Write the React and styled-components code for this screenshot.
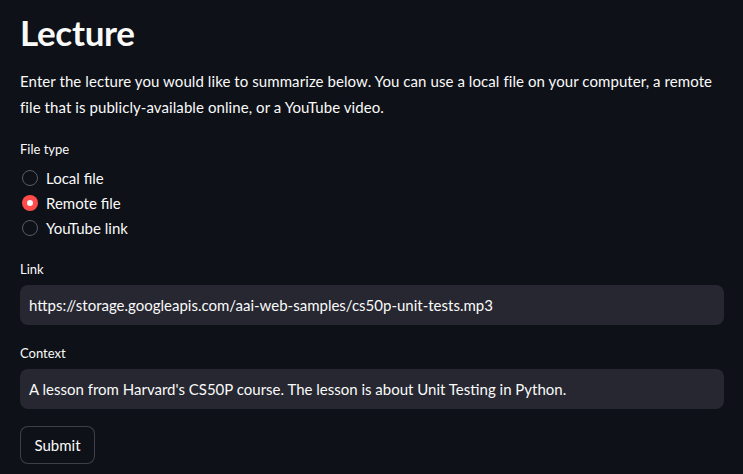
import styled, { createGlobalStyle } from "styled-components";

const GlobalStyle = createGlobalStyle`
	html, body {
		margin: 0;
		padding: 0;
		background: #0e1117;
	}
	body {
		font-family: Lato, "Liberation Sans", sans-serif;
		color: #fafafa;
	}
`;

const Page = styled.div`
	width: 743px;
	height: 474px;
	box-sizing: border-box;
	padding: 10px 19px 0 20px;
	background: #0e1117;
	overflow: hidden;
`;

const Title = styled.h1`
	margin: 0;
	font-size: 35px;
	font-weight: 700;
	line-height: 44px;
	letter-spacing: -0.3px;
`;

const Intro = styled.p`
	margin: 14px 0 0;
	font-size: 15px;
	line-height: 26px;
	letter-spacing: 0.08px;
`;

const Field = styled.div`
	margin-top: ${(p) => p.$top}px;
	display: flex;
	flex-direction: column;
`;

const Label = styled.label`
	font-size: 13px;
	line-height: 20px;
	margin-bottom: ${(p) => p.$gap}px;
`;

const RadioList = styled.div`
	display: flex;
	flex-direction: column;
	gap: 5px;
`;

const RadioRow = styled.div`
	display: flex;
	align-items: center;
	gap: 8px;
	height: 20px;
	font-size: 15px;
	padding-left: 2px;
`;

const Dot = styled.span`
	width: 16px;
	height: 16px;
	box-sizing: border-box;
	border-radius: 50%;
	border: ${(p) => (p.$on ? "none" : "1px solid #595b62")};
	background: ${(p) => (p.$on ? "#ff4b4b" : "transparent")};
	display: flex;
	align-items: center;
	justify-content: center;

	&::after {
		content: "";
		display: ${(p) => (p.$on ? "block" : "none")};
		width: 6px;
		height: 6px;
		border-radius: 50%;
		background: #fafafa;
	}
`;

const Input = styled.div`
	height: 40px;
	box-sizing: border-box;
	border-radius: 8px;
	background: #262730;
	padding: 0 9px;
	display: flex;
	align-items: center;
	font-size: 15px;
`;

const Button = styled.button`
	margin-top: 17px;
	align-self: flex-start;
	width: 75px;
	height: 38px;
	padding: 0;
	border-radius: 8px;
	border: 1px solid rgba(250, 250, 250, 0.2);
	background: #0e1117;
	color: #fafafa;
	font-family: inherit;
	font-size: 15px;
`;

const options = ["Local file", "Remote file", "YouTube link"];

export default function App() {
	return (
		<Page>
			<GlobalStyle />
			<Title>Lecture</Title>
			<Intro>
				Enter the lecture you would like to summarize below. You can use a local file on your computer, a remote
				file that is publicly-available online, or a YouTube video.
			</Intro>
			<Field $top={19}>
				<Label $gap={9}>File type</Label>
				<RadioList>
					{options.map((o, i) => (
						<RadioRow key={o}>
							<Dot $on={i === 1} />
							{o}
						</RadioRow>
					))}
				</RadioList>
			</Field>
			<Field $top={21}>
				<Label $gap={6}>Link</Label>
				<Input>https://storage.googleapis.com/aai-web-samples/cs50p-unit-tests.mp3</Input>
			</Field>
			<Field $top={18}>
				<Label $gap={6}>Context</Label>
				<Input>A lesson from Harvard's CS50P course. The lesson is about Unit Testing in Python.</Input>
				<Button>Submit</Button>
			</Field>
		</Page>
	);
}
